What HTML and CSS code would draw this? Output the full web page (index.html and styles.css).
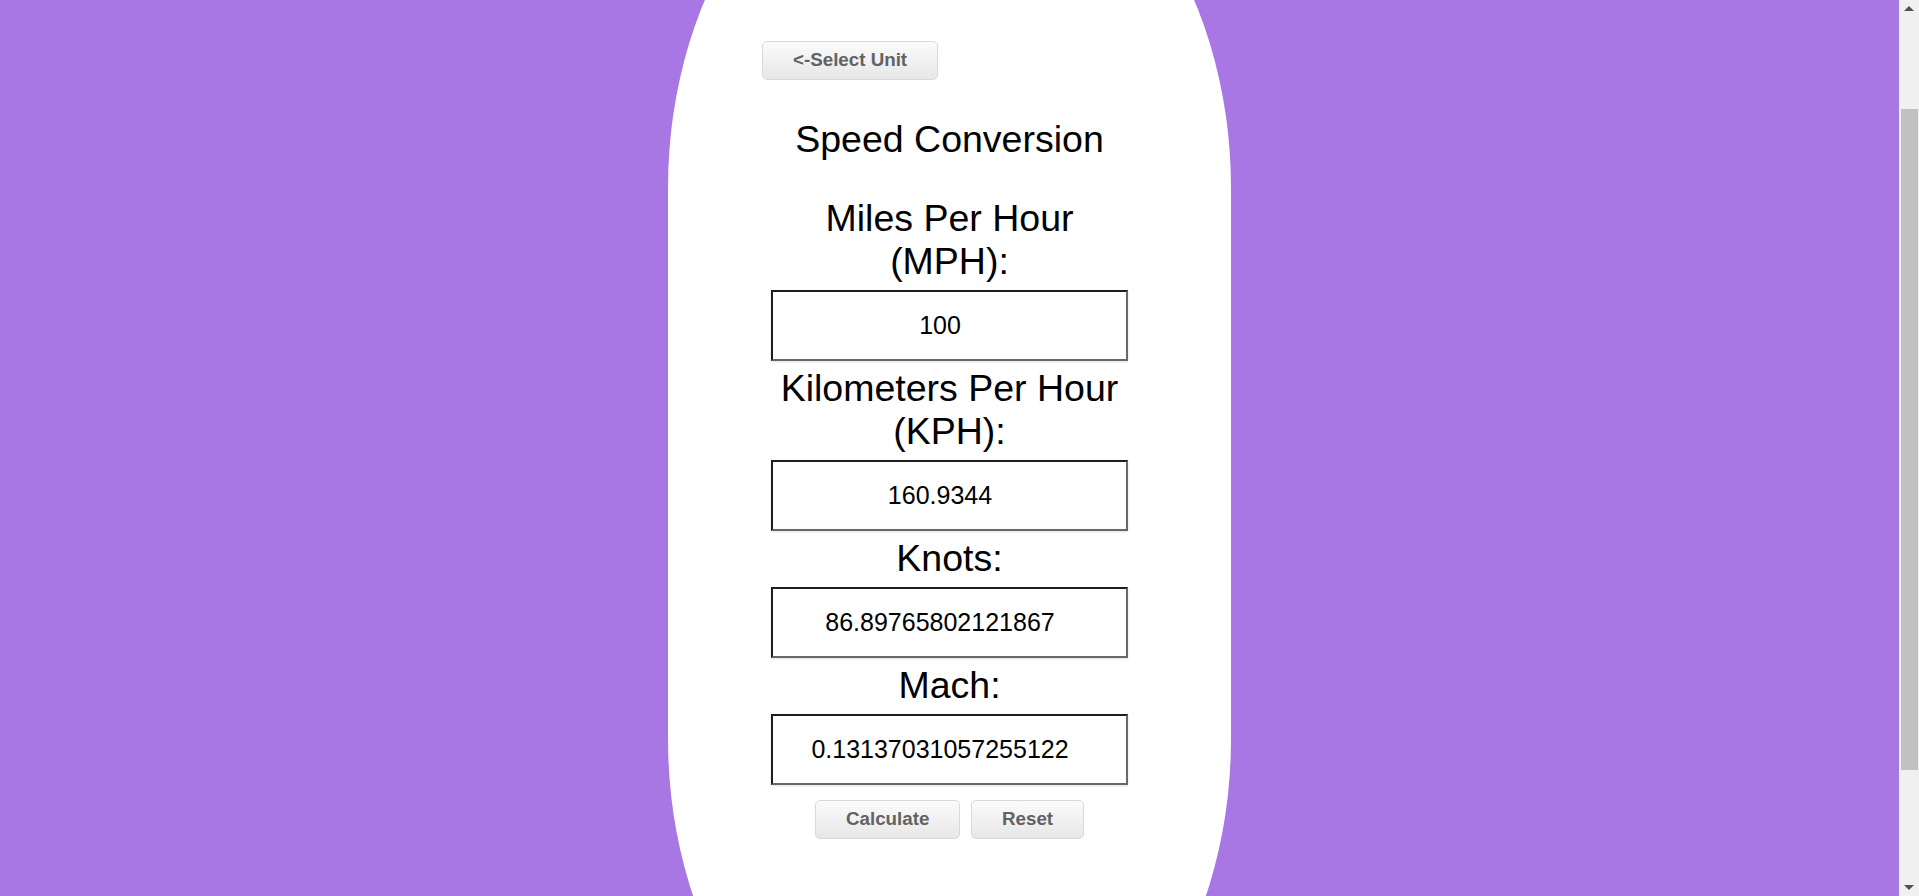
FILE: index.html
```
<!DOCTYPE html>
<html lang="en">
<head>
<meta charset="utf-8">
<title>Speed Conversion</title>
<link rel="stylesheet" href="styles.css">
</head>
<body>
<div class="page">
  <main class="card">
    <div class="top-row">
      <button class="btn" type="button">&lt;-Select Unit</button>
    </div>
    <h1 class="title">Speed Conversion</h1>
    <form class="fields">
      <label class="field-label" for="mph">Miles Per Hour (MPH):</label>
      <input class="field" id="mph" type="text" value="100">
      <label class="field-label" for="kph">Kilometers Per Hour (KPH):</label>
      <input class="field" id="kph" type="text" value="160.9344">
      <label class="field-label" for="knots">Knots:</label>
      <input class="field" id="knots" type="text" value="86.89765802121867">
      <label class="field-label" for="mach">Mach:</label>
      <input class="field" id="mach" type="text" value="0.13137031057255122">
      <div class="actions">
        <button class="btn btn-calc" type="button">Calculate</button>
        <button class="btn btn-reset" type="reset">Reset</button>
      </div>
    </form>
  </main>
</div>
<div class="scrollbar" aria-hidden="true">
  <span class="sb-up"></span>
  <span class="sb-thumb"></span>
  <span class="sb-down"></span>
</div>
<script src="script.js"></script>
</body>
</html>
```
FILE: styles.css
```
html {
  background: #a877e4;
}
body {
  margin: 0;
  font-family: "Liberation Sans", Arial, sans-serif;
  background: #a877e4;
}
.page {
  height: 1167px;
  overflow: hidden;
  padding-right: 20px;
}
.card {
  box-sizing: border-box;
  width: 563px;
  height: 1311px;
  margin: -68px auto 0;
  padding-top: 233px;
  background: #ffffff;
  border-radius: 281.5px / 380px;
  display: flex;
  flex-direction: column;
}
.top-row {
  display: flex;
  padding-left: 94px;
}
.btn {
  box-sizing: border-box;
  height: 39px;
  padding: 0 30px;
  border: 1px solid #d9d9d9;
  border-radius: 5px;
  background: linear-gradient(to bottom, #fbfbfb, #e7e7e7);
  color: #626262;
  font-family: "Liberation Sans", Arial, sans-serif;
  font-weight: bold;
  font-size: 18.75px;
  line-height: 1;
  cursor: pointer;
}
.title {
  margin: 37.5px 0 0;
  font-size: 37.5px;
  font-weight: normal;
  line-height: normal;
  text-align: center;
  color: #000;
}
.fields {
  display: flex;
  flex-direction: column;
  align-items: center;
  margin: 36.4px 0 0;
}
.field-label {
  width: 357px;
  font-size: 37.5px;
  line-height: normal;
  text-align: center;
  color: #000;
}
.field {
  box-sizing: border-box;
  width: 357px;
  height: 71px;
  margin: 7px 0 6px;
  padding: 0 19px 0 0;
  border: 2px solid;
  border-color: #1e1e1e #686868 #686868 #1e1e1e;
  box-shadow: 0 1px 2px rgba(0, 0, 0, 0.12);
  background: #fff;
  color: #000;
  font-family: "Liberation Sans", Arial, sans-serif;
  font-size: 25px;
  text-align: center;
}
.actions {
  display: flex;
  gap: 11px;
  margin-top: 9px;
}
.btn-calc {
  width: 145px;
}
.btn-reset {
  width: 113px;
}
.scrollbar {
  position: fixed;
  top: 0;
  right: 0;
  width: 20px;
  height: 100%;
  background: #f0f0f0;
}
.sb-thumb {
  position: absolute;
  top: 109px;
  left: 2px;
  width: 17px;
  height: 661px;
  background: #c1c1c1;
}
.sb-up,
.sb-down {
  position: absolute;
  left: 5px;
  width: 0;
  height: 0;
  border-left: 5px solid transparent;
  border-right: 5px solid transparent;
}
.sb-up {
  top: 6px;
  border-bottom: 5px solid #505050;
}
.sb-down {
  bottom: 6px;
  border-top: 5px solid #505050;
}
```
FILE: script.js
```
window.scrollTo(0, 124);
window.addEventListener('load', function () { window.scrollTo(0, 124); });
```
